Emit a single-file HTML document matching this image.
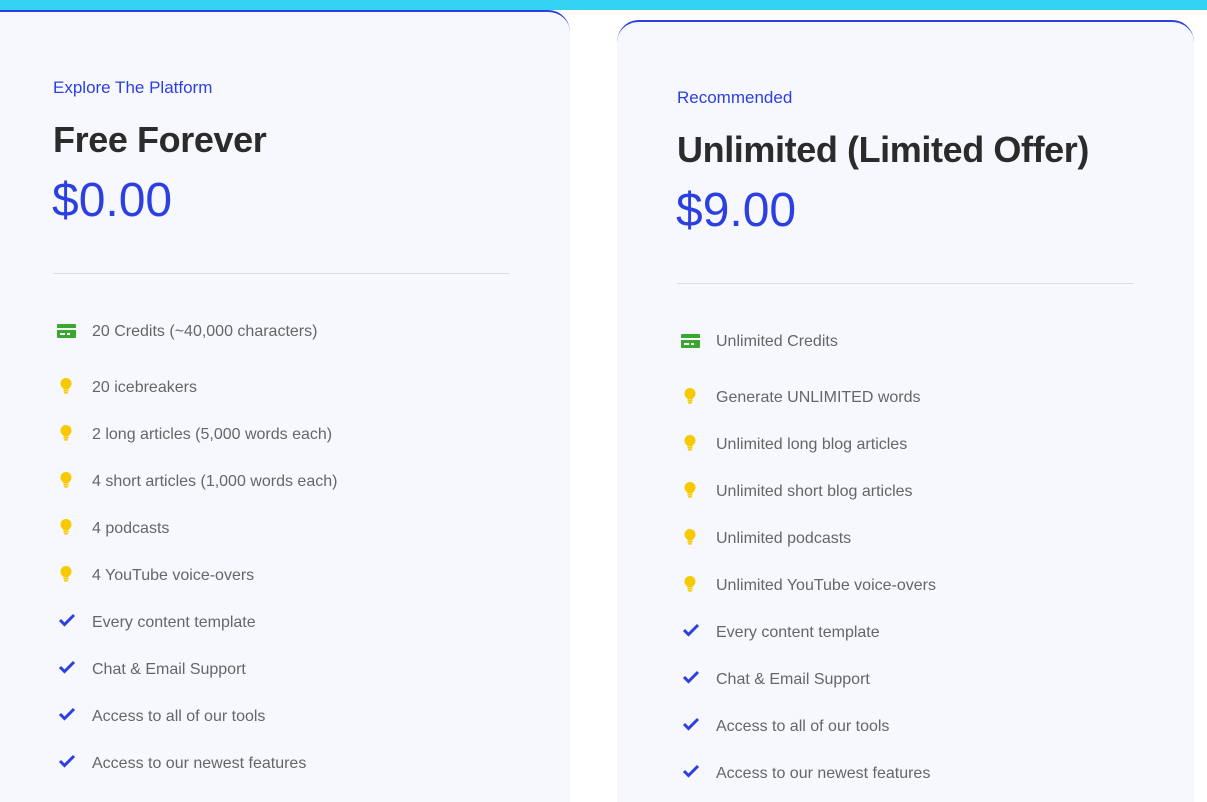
<!DOCTYPE html>
<html><head><style>
html,body{margin:0;width:1207px;height:802px;overflow:hidden}
body{background:#fff;position:relative;font-family:"Liberation Sans",sans-serif}
.bar{position:absolute;left:0;top:0;width:1207px;height:10px;background:#34d3f2}
.card{position:absolute;background:#f7f8fd;border-top:2px solid #2c3fe0;border-radius:22px 22px 0 0}
.c1{left:-22px;top:10px;width:592px;height:792px}
.c2{left:617px;top:20px;width:577px;height:782px}
.a{position:absolute;white-space:nowrap}
.lbl{font-size:17px;color:#2c3fe0}
.ttl{font-size:36px;font-weight:bold;color:#2b2b2b;letter-spacing:-0.4px}
.prc{font-size:48px;color:#2c3fe0}
.hr{position:absolute;height:1px;background:#dcdde3}
.it{font-size:16px;color:#666}
</style></head><body>
<div class="bar"></div>
<div class="card c1"></div>
<div class="card c2"></div>
<div id="c"></div>
<script>
function card(x,y,lbl,ttl,prc,items){
 let h=`<div class="a lbl" style="left:${x}px;top:${y+68}px">${lbl}</div>
 <div class="a ttl" style="left:${x}px;top:${y+109}px">${ttl}</div>
 <div class="a prc" style="left:${x-1}px;top:${y+163}px">${prc}</div>
 <div class="hr" style="left:${x}px;top:${y+263}px;width:456px"></div>`;
 items.forEach((it,i)=>{
  const cy=y+321+(i==0?0:56+(i-1)*47);
  let ic;
  if(it[0]=='c') ic=`<svg class="a" style="left:${x+4}px;top:${cy-7}px" width="20" height="14"><rect x="0" y="0" width="19" height="14" rx="1" fill="#3aa82e"/><rect x="0" y="4" width="19" height="2" fill="#f7f8fd"/><rect x="3" y="9" width="5" height="2" fill="#fff"/><rect x="10" y="9" width="3" height="2" fill="#fff"/></svg>`;
  else if(it[0]=='b') ic=`<svg class="a" style="left:${x+6}px;top:${cy-10}px" width="14" height="18"><path d="M7 1a5.5 5.5 0 0 0-3.2 10c.5.4.7 1 .7 1.6h5c0-.6.2-1.2.7-1.6A5.5 5.5 0 0 0 7 1z" fill="#f7c900"/><rect x="4.5" y="13" width="5" height="1.6" fill="#f7c900"/><rect x="5" y="15" width="4" height="1.6" rx=".8" fill="#f7c900"/></svg>`;
  else ic=`<svg class="a" style="left:${x+5}px;top:${cy-9}px" width="18" height="14"><path d="M2 7l4.5 4.5L16 2" fill="none" stroke="#2c3fe0" stroke-width="3"/></svg>`;
  h+=ic+`<div class="a it" style="left:${x+39}px;top:${cy-8}px">${it.slice(1)}</div>`;
 });
 document.getElementById('c').innerHTML+=h;
}
card(53,10,"Explore The Platform","Free Forever","$0.00",["c20 Credits (~40,000 characters)","b20 icebreakers","b2 long articles (5,000 words each)","b4 short articles (1,000 words each)","b4 podcasts","b4 YouTube voice-overs","kEvery content template","kChat &amp; Email Support","kAccess to all of our tools","kAccess to our newest features"]);
card(677,20,"Recommended","Unlimited (Limited Offer)","$9.00",["cUnlimited Credits","bGenerate UNLIMITED words","bUnlimited long blog articles","bUnlimited short blog articles","bUnlimited podcasts","bUnlimited YouTube voice-overs","kEvery content template","kChat &amp; Email Support","kAccess to all of our tools","kAccess to our newest features"]);
</script>
</body></html>
